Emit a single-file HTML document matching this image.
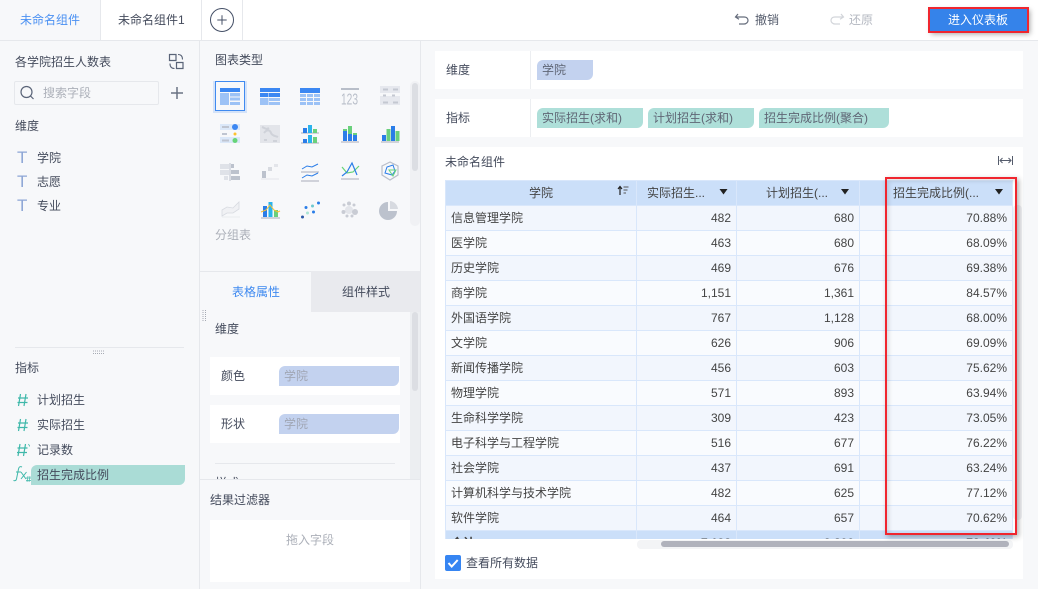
<!DOCTYPE html>
<html lang="zh"><head><meta charset="utf-8"><style>
*{box-sizing:border-box}
html,body{margin:0;padding:0;width:1038px;height:589px;overflow:hidden;background:#f7f8fa;font:12px/20px "Liberation Sans","Noto Sans CJK SC",sans-serif;color:#444b5c}
.a{position:absolute}
.t{position:absolute;white-space:nowrap;line-height:20px}
.chip{position:absolute;height:20px;border-radius:6px 0 6px 0;padding-left:5px;line-height:20px;white-space:nowrap;color:#5f6675}
.g{background:#aedfd9}.b{background:#c3d2ef}
.card{position:absolute;background:#fff}
table{border-collapse:collapse;table-layout:fixed;position:absolute;left:0;top:0;width:567px;color:#444}
td,th{height:25px;padding:0 5px;border:1px solid #d9e7fb;font-weight:normal;text-align:right;white-space:nowrap;overflow:hidden}
td:first-child{text-align:left}
tr:nth-child(even) td{background:#f2f6fd}
tr:nth-child(odd) td{background:#f9fbfe}
th,tr.total td{background:#cbdff9!important}
tr.total td{font-weight:bold}
</style></head><body>
<!-- top bar -->
<div class="a" style="left:0;top:0;width:1038px;height:41px;background:#fff;border-bottom:1px solid #e6e8ec"></div>
<div class="a" style="left:0;top:0;width:101px;height:40px;background:#f7f8fa;border-right:1px solid #e6e8ec"></div>
<div class="a" style="left:201px;top:0;width:42px;height:40px;border-left:1px solid #e6e8ec;border-right:1px solid #e6e8ec"></div>
<div class="t" style="left:20px;top:10px;color:#4a90f2">未命名组件</div>
<div class="t" style="left:118px;top:10px;color:#444b5c">未命名组件1</div>
<div class="t" style="left:755px;top:10px;color:#555c6c">撤销</div>
<div class="t" style="left:849px;top:10px;color:#b4b8c1">还原</div>
<div class="a" style="left:929px;top:8px;width:99px;height:24px;background:#3583ea;box-shadow:2px 2px 5px rgba(0,0,0,.35)"></div>
<div class="t" style="left:948px;top:10px;color:#fff">进入仪表板</div>
<div class="a" style="left:928px;top:7px;width:101px;height:26px;border:2px solid #f0262f"></div>

<!-- panels -->
<div class="a" style="left:199px;top:41px;width:1px;height:548px;background:#e6e8ec"></div>
<div class="a" style="left:420px;top:41px;width:1px;height:548px;background:#e6e8ec"></div>

<!-- left panel -->
<div class="t" style="left:15px;top:52px">各学院招生人数表</div>
<div class="a" style="left:14px;top:81px;width:145px;height:24px;border:1px solid #e6e8ec;border-radius:2px"></div>
<div class="t" style="left:43px;top:83px;color:#acb0b9">搜索字段</div>
<div class="t" style="left:15px;top:116px">维度</div>
<div class="t" style="left:37px;top:148px">学院</div>
<div class="t" style="left:37px;top:172px">志愿</div>
<div class="t" style="left:37px;top:196px">专业</div>
<div class="a" style="left:15px;top:347px;width:169px;height:1px;background:#e6e8ec"></div>
<div class="t" style="left:15px;top:358px">指标</div>
<div class="t" style="left:37px;top:390px">计划招生</div>
<div class="t" style="left:37px;top:415px">实际招生</div>
<div class="t" style="left:37px;top:440px">记录数</div>
<div class="chip" style="left:31px;top:465px;width:154px;background:#aadcd6;color:#444b5c;padding-left:6px">招生完成比例</div>
<div class="t" style="left:17px;top:148px;font-size:17px;color:#8ea6d6">T</div>
<div class="t" style="left:17px;top:172px;font-size:17px;color:#8ea6d6">T</div>
<div class="t" style="left:17px;top:196px;font-size:17px;color:#8ea6d6">T</div>

<!-- middle panel -->
<div class="t" style="left:215px;top:50px">图表类型</div>
<div class="t" style="left:215px;top:225px;color:#acb0b9">分组表</div>
<div class="a" style="left:410px;top:81px;width:10px;height:145px;background:#f0f1f4;border-radius:5px"></div>
<div class="a" style="left:412px;top:83px;width:6px;height:88px;background:#dcdee3;border-radius:3px"></div>
<div class="a" style="left:311px;top:271px;width:109px;height:41px;background:#e9eaee"></div>
<div class="a" style="left:200px;top:271px;width:111px;height:1px;background:#e6e8ec"></div>
<div class="t" style="left:232px;top:282px;color:#3f8af0">表格属性</div>
<div class="t" style="left:342px;top:282px;color:#444b5c">组件样式</div>
<div class="t" style="left:215px;top:319px">维度</div>
<div class="a" style="left:410px;top:312px;width:10px;height:167px;background:#eceef1"></div>
<div class="a" style="left:412px;top:312px;width:6px;height:79px;background:#dcdee3;border-radius:3px"></div>
<div class="card" style="left:210px;top:357px;width:190px;height:38px"></div>
<div class="card" style="left:210px;top:405px;width:190px;height:38px"></div>
<div class="t" style="left:221px;top:366px">颜色</div>
<div class="t" style="left:221px;top:414px">形状</div>
<div class="chip b" style="left:279px;top:366px;width:120px;color:#a0a6b4">学院</div>
<div class="chip b" style="left:279px;top:414px;width:120px;color:#a0a6b4">学院</div>
<div class="a" style="left:215px;top:463px;width:180px;height:1px;background:#e6e8ec"></div>
<div class="a" style="left:215px;top:470px;width:40px;height:9px;overflow:hidden"><div class="t" style="left:0;top:3px">样式</div></div>
<div class="a" style="left:200px;top:479px;width:220px;height:1px;background:#e6e8ec"></div>
<div class="t" style="left:210px;top:490px">结果过滤器</div>
<div class="card" style="left:210px;top:520px;width:200px;height:62px"></div>
<div class="t" style="left:286px;top:530px;color:#acb0b9">拖入字段</div>

<!-- right cards -->
<div class="card" style="left:435px;top:51px;width:588px;height:38px"></div>
<div class="card" style="left:435px;top:99px;width:588px;height:38px"></div>
<div class="card" style="left:435px;top:147px;width:588px;height:432px"></div>
<div class="a" style="left:530px;top:51px;width:1px;height:38px;background:#eceef1"></div>
<div class="a" style="left:530px;top:99px;width:1px;height:38px;background:#eceef1"></div>
<div class="t" style="left:446px;top:60px">维度</div>
<div class="t" style="left:446px;top:108px">指标</div>
<div class="chip b" style="left:537px;top:60px;width:56px">学院</div>
<div class="chip g" style="left:537px;top:108px;width:106px">实际招生(求和)</div>
<div class="chip g" style="left:648px;top:108px;width:106px">计划招生(求和)</div>
<div class="chip g" style="left:759px;top:108px;width:130px">招生完成比例(聚合)</div>
<div class="t" style="left:445px;top:152px">未命名组件</div>

<!-- table -->
<div class="a" style="left:1013px;top:205px;width:9px;height:315px;background:#f0f1f4;border-radius:4px"></div>
<div class="a" style="left:445px;top:180px;width:568px;height:359px;overflow:hidden">
<table><colgroup><col style="width:191px"><col style="width:100px"><col style="width:123px"><col style="width:153px"></colgroup>
<tbody>
<tr><th style="text-align:center">学院</th><th style="text-align:left;padding-left:10px">实际招生...</th><th style="text-align:left;padding-left:29px">计划招生(...</th><th style="text-align:left;padding-left:33px">招生完成比例(...</th></tr>
<tr><td>信息管理学院</td><td>482</td><td>680</td><td>70.88%</td></tr>
<tr><td>医学院</td><td>463</td><td>680</td><td>68.09%</td></tr>
<tr><td>历史学院</td><td>469</td><td>676</td><td>69.38%</td></tr>
<tr><td>商学院</td><td>1,151</td><td>1,361</td><td>84.57%</td></tr>
<tr><td>外国语学院</td><td>767</td><td>1,128</td><td>68.00%</td></tr>
<tr><td>文学院</td><td>626</td><td>906</td><td>69.09%</td></tr>
<tr><td>新闻传播学院</td><td>456</td><td>603</td><td>75.62%</td></tr>
<tr><td>物理学院</td><td>571</td><td>893</td><td>63.94%</td></tr>
<tr><td>生命科学学院</td><td>309</td><td>423</td><td>73.05%</td></tr>
<tr><td>电子科学与工程学院</td><td>516</td><td>677</td><td>76.22%</td></tr>
<tr><td>社会学院</td><td>437</td><td>691</td><td>63.24%</td></tr>
<tr><td>计算机科学与技术学院</td><td>482</td><td>625</td><td>77.12%</td></tr>
<tr><td>软件学院</td><td>464</td><td>657</td><td>70.62%</td></tr>
<tr class="total"><td>合计</td><td>7,193</td><td>9,800</td><td>73.40%</td></tr>
</tbody></table></div>
<div class="a" style="left:637px;top:540px;width:376px;height:9px;background:#f3f4f6;border-radius:4px"></div>
<div class="a" style="left:661px;top:541px;width:348px;height:6px;background:#b0b2bc;border-radius:3px"></div>
<div class="a" style="left:885px;top:177px;width:132px;height:358px;border:2px solid #f0262f;box-shadow:2px 2px 5px rgba(0,0,0,.3),inset 2px 2px 4px rgba(0,0,0,.12)"></div>
<div class="a" style="left:445px;top:555px;width:16px;height:16px;background:#3685f2;border-radius:2px"></div>
<div class="t" style="left:466px;top:553px;color:#444b5c">查看所有数据</div>

<!-- icons -->
<svg class="a" style="left:0;top:0" width="1038" height="589" viewBox="0 0 1038 589" fill="none">
<!-- plus tab -->
<circle cx="222" cy="20" r="11.500" stroke="#444f66" stroke-width="1"/><path d="M217.300 20h9.400M222 15.300v9.400" stroke="#444f66"/>
<!-- undo/redo -->
<path d="M738 14l-2.500 3 3.500 2.200M736 17h8c3 0 4 2 4 3.500s-1.500 3.500-4 3.500h-5" stroke="#666d7c" stroke-width="1.200"/>
<path d="M841 14l2.500 3-3.500 2.200M843 17h-8c-3 0-4 2-4 3.500s1.500 3.500 4 3.500h5" stroke="#d2d5da" stroke-width="1.200"/>
<!-- swap icon -->
<path d="M169.500 54.500h6.500v6h-6.500zM176.500 62.500h6.500v6h-6.500z" stroke="#5a6478" stroke-width="1.200"/>
<path d="M178 54.500c3 0 4.500 2 4.500 5M174.500 68.500c-3 0-4.500-2-4.500-5" stroke="#5a6478" stroke-width="1.100"/>
<!-- search, plus -->
<circle cx="26.500" cy="92" r="5.500" stroke="#5a6478" stroke-width="1.200"/><path d="M30.500 96l3 3" stroke="#5a6478" stroke-width="1.200"/>
<path d="M171 93h12M177 87v12" stroke="#6a7283" stroke-width="1.500"/>
<!-- grips -->
<path d="M93 351h12M93 353.500h12" stroke="#a5a9b2" stroke-dasharray="1 1"/>
<path d="M203 310v11M205.500 310v11" stroke="#a5a9b2" stroke-dasharray="1 1"/>
<!-- # icons -->
<g stroke="#3fb8aa" stroke-width="1.200">
<path d="M20.500 394l-2 12M26 394l-2 12M18 398h10M17.500 402.500h10"/>
<path d="M20.500 419l-2 12M26 419l-2 12M18 423h10M17.500 427.500h10"/>
<path d="M20 444l-2 12M25.500 444l-2 12M17.500 448h10M17 452.500h10"/>
<path d="M28.500 444l1 2M30 446l-1 0" stroke-width=".8"/>
<path d="M22 467c-2-1-3 0-3.500 2l-2 10c-.3 1.500-1.500 2-3 1.500M16 472h5M21 472l5 7M26.500 472l-5.500 7" stroke-width="1"/>
</g>
<path d="M28 476l-1 6M30 476l-1 6M26 478h5M26 480.500h5" stroke="#3fb8aa" stroke-width=".7"/>
<!-- sort icon, arrows -->
<path d="M620 195v-8M618 189l2-2.500 2 2.500" stroke="#222" stroke-width="1.200"/>
<path d="M623.500 187h5M623.500 190h4M623.500 193h2.500" stroke="#555"/>
<path d="M719.500 189h8l-4 5.500zM841 189h8l-4 5.500zM995 189h8l-4 5.500z" fill="#222"/>
<!-- expand icon -->
<path d="M998.500 156v9M1012.500 156v9M1000 160.500h11M1002.500 158l-2.500 2.500 2.500 2.500M1008.500 158l2.500 2.500-2.500 2.500" stroke="#555c6c"/>
<!-- checkbox -->
<path d="M448.500 563l3.200 3.500 6-6.500" stroke="#fff" stroke-width="2"/>

<!-- chart icons row 1 -->
<rect x="213" y="81" width="34" height="32" fill="#d4e3f9"/>
<rect x="215.500" y="81.500" width="29" height="29" fill="#f7f8fa" stroke="#3f8af0"/>
<g fill="#3b87f2">
<rect x="220" y="88" width="20" height="4"/>
<rect x="260" y="88" width="20" height="4"/>
<rect x="260" y="93" width="8.500" height="4"/><rect x="269" y="93" width="11" height="4"/>
<rect x="300" y="88" width="20" height="5"/>
</g>
<g fill="#9cc2f6">
<rect x="220" y="93" width="9" height="12"/>
<rect x="230" y="93" width="10" height="3.500"/><rect x="230" y="97.500" width="10" height="3"/><rect x="230" y="102" width="10" height="3"/>
<rect x="260" y="98" width="8.500" height="7"/><rect x="269" y="98" width="11" height="3"/><rect x="269" y="102" width="11" height="3"/>
<rect x="300" y="94" width="6" height="3"/><rect x="307" y="94" width="6" height="3"/><rect x="314" y="94" width="6" height="3"/>
<rect x="300" y="98" width="6" height="3"/><rect x="307" y="98" width="6" height="3"/><rect x="314" y="98" width="6" height="3"/>
<rect x="300" y="102" width="6" height="3"/><rect x="307" y="102" width="6" height="3"/><rect x="314" y="102" width="6" height="3"/>
</g>
<rect x="341" y="88" width="18" height="2" fill="#b8bec9"/>
<text x="341" y="104.500" font-size="16" font-family="Liberation Sans Narrow,Liberation Sans,sans-serif" fill="#b8bec9" textLength="17" lengthAdjust="spacingAndGlyphs">123</text>
<g fill="#e6e8ee"><rect x="380" y="86" width="20" height="7"/><rect x="380" y="96" width="20" height="3"/><rect x="380" y="99" width="20" height="6"/></g>
<path d="M383 89.500h5M393 89.500h5M383 95.500h3M392 95.500h3M383 102.500h5M393 102.500h5" stroke="#c4c8d1" stroke-width="2"/>
<!-- row 2 -->
<rect x="220" y="124" width="20" height="6" fill="#dbe8f9"/><rect x="220" y="137" width="20" height="6" fill="#dbe8f9"/>
<circle cx="235" cy="127" r="3" fill="#3b87f2"/><circle cx="235" cy="134" r="1.500" fill="#fdc12f"/><circle cx="235" cy="140.500" r="2.500" fill="#66d478"/>
<path d="M222 127h7M222 134h5M222 140.500h7" stroke="#bfc5d1" stroke-width="2"/>
<rect x="260" y="125" width="20" height="18" fill="#e3e5ea"/>
<path d="M264 133c3-4 6-3 7 0s5 3 7 4M262 127c3 1 4 3 7 1M264 140h3M273 141h4" stroke="#cfd2d9" stroke-width="2"/>
<path d="M301 133h18M301 143h18M341 142h18M381 142h18" stroke="#a8adb9"/>
<g fill="#2a7de8"><rect x="303" y="128" width="4" height="5"/><rect x="303" y="139" width="4" height="4"/><rect x="343" y="131" width="4" height="10"/><rect x="353" y="135" width="4" height="6"/><rect x="382" y="135" width="4" height="6"/><rect x="391" y="126" width="4" height="15"/></g>
<g fill="#2bb3ec"><rect x="308" y="125" width="4" height="8"/><rect x="308" y="135" width="4" height="8"/></g>
<g fill="#6ad07c"><rect x="313" y="129" width="4" height="4"/><rect x="313" y="137" width="4" height="6"/><rect x="348" y="126" width="4" height="8"/><rect x="343" y="129" width="4" height="2"/><rect x="353" y="133" width="4" height="2"/><rect x="386.500" y="129" width="4" height="12"/><rect x="395.500" y="131" width="4" height="10"/></g>
<rect x="348" y="134" width="4" height="7" fill="#2a7de8"/>
<!-- row 3 -->
<g fill="#dfe2e8"><rect x="220" y="164" width="9" height="5"/><rect x="220" y="170" width="9" height="5"/><rect x="224" y="176" width="4" height="4"/></g>
<g fill="#bcc2cd"><rect x="231" y="164" width="3" height="4"/><rect x="231" y="170" width="8" height="4"/><rect x="231" y="176" width="9" height="4"/><rect x="229.500" y="163" width="1" height="18"/></g>
<rect x="262" y="171" width="4" height="7" fill="#bcc2cd"/><rect x="268" y="167" width="4" height="4" fill="#d7dae0"/><rect x="274" y="164" width="4" height="3" fill="#e3e5ea"/><path d="M261 179h18" stroke="#e3e5ea"/>
<path d="M301 172h18M301 181h18M341 179h18" stroke="#a8adb9"/>
<path d="M302 169l5-3 5 1 6-3M302 178l5-3 5 1 6-3" stroke="#2a7de8"/>
<path d="M342 167l5 6 6-1 6-6" stroke="#66d478" stroke-width="1.200"/><path d="M342 176l5-4 5-9 5 12" stroke="#2a7de8" stroke-width="1.200"/>
<path d="M390 162l8 4v9l-8 5-8-5v-9z" stroke="#b9bec9" stroke-width="1.200"/>
<path d="M385 173l2-6 6-2 2 6-3 4z" stroke="#2a7de8"/><path d="M389 170h7l-3 6z" stroke="#66d478"/>
<!-- row 4 -->
<path d="M222 210l5-3 6 1 6-6v7l-6 4-6 0-5 3z" fill="#f0f1f4" stroke="#d7dae0" stroke-width=".8"/><path d="M222 217h18" stroke="#e9ebef"/>
<rect x="263" y="206" width="4" height="11" fill="#2a7de8"/><rect x="268.500" y="202" width="4" height="15" fill="#2bb3ec"/><rect x="274" y="210" width="4" height="7" fill="#6ad07c"/>
<path d="M261 212l5-2 4-5 4 5 4 2 2-1" stroke="#fdc12f"/><path d="M261 218h19" stroke="#a8adb9"/>
<g fill="#2a7de8"><circle cx="302.500" cy="217" r="1.500" fill="#2c58a8"/><circle cx="306" cy="207.500" r="1.500"/><circle cx="313.500" cy="212" r="1.500"/><circle cx="318.500" cy="203" r="1.500"/></g>
<circle cx="307.500" cy="213" r="1.500" fill="#a9e4d4"/><circle cx="312.500" cy="206" r="1.500" fill="#6cc8d0"/>
<g fill="#c9ccd4"><circle cx="349" cy="210" r="4" fill="#e3e5ea"/><circle cx="355" cy="212" r="3"/><circle cx="349" cy="203.500" r="2"/><circle cx="354" cy="205" r="1.500"/><circle cx="343.500" cy="212" r="2"/><circle cx="344" cy="205" r="1.500"/><circle cx="347" cy="216" r="1.500"/><circle cx="352" cy="216" r="1.500"/></g>
<path d="M388 202a9 9 0 1 0 9 9h-9z" fill="#bcc2cd"/><path d="M390 201a9 9 0 0 1 8 8h-8z" fill="#d7dae0"/>
</svg>
</body></html>
